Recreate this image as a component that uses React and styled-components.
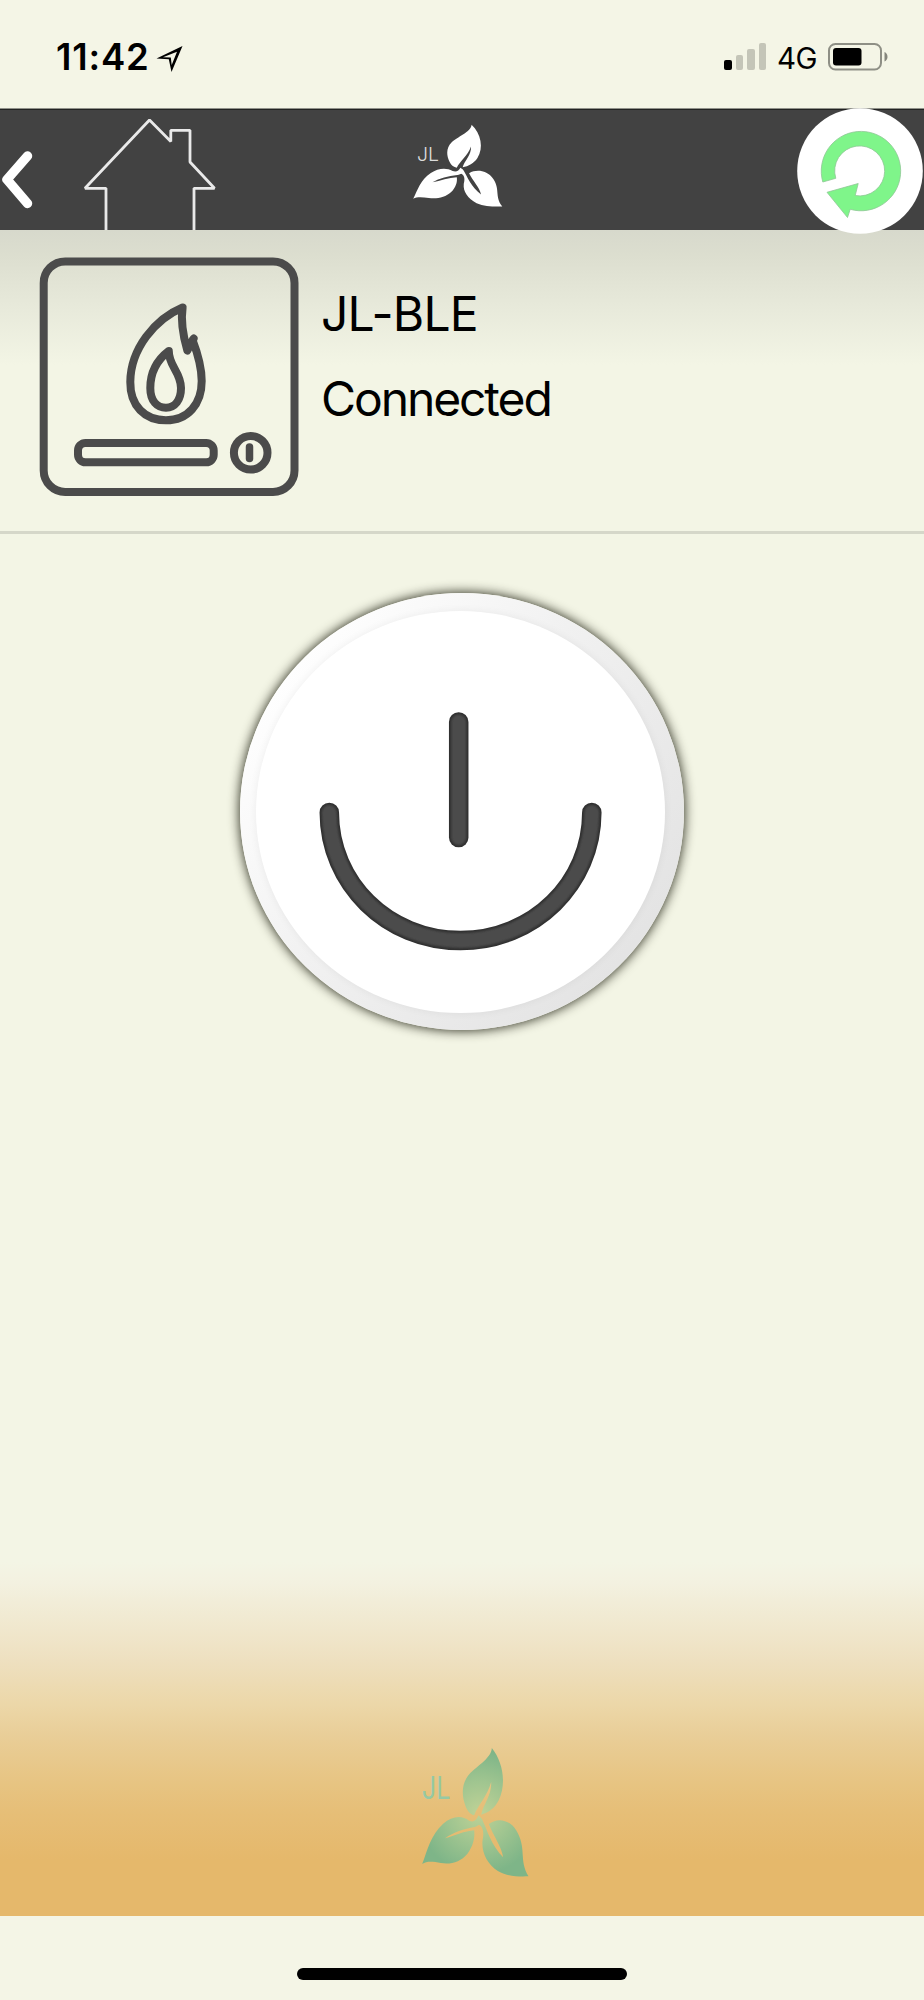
import React from "react";
import styled, { createGlobalStyle } from "styled-components";

const GlobalStyle = createGlobalStyle`
  * { box-sizing: border-box; }
  body { margin: 0; background: #f4f5e6; }
  svg { display: block; overflow: visible; }
  button { border: 0; padding: 0; margin: 0; background: none; }
`;

const Screen = styled.div`
  width: 924px;
  height: 2000px;
  display: flex;
  flex-direction: column;
  overflow: hidden;
  background: #f4f5e6;
  color: #000;
  font-family: Inter, "Liberation Sans", sans-serif;
`;

const StatusBar = styled.header`
  height: 108px;
  flex: none;
  display: flex;
  justify-content: space-between;
  align-items: flex-start;
  padding: 0 36px 0 56px;
`;

const StatusGroup = styled.div`
  display: flex;
  align-items: flex-start;
`;

const Clock = styled.span`
  width: 93px;
  margin: 35px 7px 0 0;
  font-size: 36.5px;
  line-height: 44px;
  font-weight: 600;
  letter-spacing: 0.8px;
  white-space: nowrap;
`;

const LocationIcon = styled.svg`
  margin-top: 46px;
`;

const SignalBars = styled.div`
  display: flex;
  align-items: flex-end;
  gap: 4px;
  height: 27px;
  margin: 43px 11px 0 0;
`;

const SignalBar = styled.i`
  width: 7.5px;
  height: ${(p) => p.$height}px;
  border-radius: 2px;
  background: ${(p) => (p.$on ? "#000" : "#c4c5b8")};
`;

const Network = styled.span`
  width: 40px;
  margin: 40px 11px 0 0;
  font-size: 29.5px;
  line-height: 36px;
  letter-spacing: -0.6px;
  white-space: nowrap;
`;

const BatteryIcon = styled.svg`
  margin-top: 43px;
`;

const NavBar = styled.nav`
  height: 122px;
  flex: none;
  position: relative;
  z-index: 1;
  display: flex;
  align-items: flex-start;
  border-top: 1px solid #90918a;
  background: linear-gradient(#222 1px, #424242 1px);
`;

const BackButton = styled.button`
  width: 34px;
  height: 58px;
  margin: 41px 48px 0 0;
`;

const HomeButton = styled.button`
  width: 136px;
  height: 113px;
  margin: 8px 0 0 0;
`;

const Brand = styled.div`
  width: 90px;
  height: 84px;
  margin: 15px 0 0 195px;
`;

const RefreshButton = styled.button`
  width: 126px;
  height: 126px;
  margin: -1px 1px 0 auto;
`;

const Content = styled.main`
  flex: 1;
  display: flex;
  flex-direction: column;
  background:
    linear-gradient(#d7d9cc 0, #dcdecf 25px, #e7e9da 75px, #f3f5e5 135px, rgba(243, 245, 229, 0) 136px),
    linear-gradient(
      #f3f5e5 0, #f3f5e5 1332px, #f3f1e0 1353px, #f1ead2 1387px, #eee0c0 1430px,
      #ecd7a8 1475px, #e9ce98 1505px, #e7c482 1553px, #e6be77 1583px, #e5b86b 1630px, #e5b86b 100%
    );
`;

const DeviceRow = styled.section`
  height: 304px;
  flex: none;
  display: flex;
  align-items: flex-start;
  padding: 28px 0 0 40px;
  border-bottom: 3px solid #d5d7c9;
`;

const DeviceIcon = styled.svg`
  flex: none;
`;

const DeviceText = styled.div`
  display: flex;
  flex-direction: column;
  gap: 25px;
  margin: 26px 0 0 22px;
`;

const DeviceLine = styled.div`
  font-size: 48px;
  line-height: 60px;
  font-weight: 380;
  letter-spacing: ${(p) => p.$tracking}px;
  white-space: nowrap;
`;

const PowerArea = styled.section`
  flex: 1;
  display: flex;
  justify-content: center;
  align-items: flex-start;
  padding-top: 59px;
`;

const PowerButton = styled.button`
  width: 444px;
  height: 437px;
  flex: none;
  display: flex;
  align-items: center;
  justify-content: center;
  padding: 0 3px 0 0;
  border-radius: 50%;
  background: linear-gradient(128deg, #fff 12%, #f1f1f1 45%, #e4e4e4 85%);
  box-shadow: 0 0 11px 1px rgba(45, 46, 32, 0.95);
`;

const PowerFace = styled.span`
  width: 409px;
  height: 402px;
  display: block;
  border-radius: 50%;
  background: #fff;
  box-shadow: 0 0 9px rgba(0, 0, 0, 0.06);
`;

const Footer = styled.footer`
  display: flex;
  padding: 0 0 39px 422px;
`;

const HomeArea = styled.div`
  height: 84px;
  flex: none;
  display: flex;
  justify-content: center;
  padding-top: 52px;
`;

const HomeIndicator = styled.div`
  width: 330px;
  height: 12px;
  border-radius: 6px;
  background: #000;
`;

const LogoLabel = styled.text`
  font-family: Inter, "Liberation Sans", sans-serif;
  font-weight: ${(p) => p.$weight};
  font-size: ${(p) => p.$size}px;
`;

const TOP_LEAF = "M275 82C274 115 222 140 203 166C182 195 186 231 196 256C202 274 212 281 222 284C233 254 262 226 273 184C275 224 250 249 243 282C264 276 283 264 296 238C319 191 309 124 275 82Z";
const LEFT_LEAF = "M66 430C82 389 91 343 129 309C155 286 185 282 207 300C222 307 229 297 235 284L244 293C244 306 239 315 224 319C191 325 160 334 135 353C163 345 194 331 222 329C225 352 218 378 202 399C181 424 152 432 122 427C98 423 80 421 66 430Z";
const RIGHT_LEAF = "M228 313L238 291L246 296C259 325 274 375 309 410C303 375 279 345 266 310C294 288 330 299 348 329C381 383 355 416 385 467C352 468 321 467 293 451C261 429 244 397 247 360C253 333 247 318 238 313Z";

function Leaves({ fill }) {
  return (
    <g fill={fill}>
      <path d={TOP_LEAF} />
      <path d={LEFT_LEAF} />
      <path d={RIGHT_LEAF} />
    </g>
  );
}

function HeaderLogo() {
  return (
    <svg width="90" height="84" viewBox="0 0 90 84">
      <LogoLabel x="4" y="36.500" $size={19} $weight={300} textLength="22" lengthAdjust="spacingAndGlyphs" fill="#dcdcdc">JL</LogoLabel>
      <g transform="translate(-18.2 -16.7) scale(.2792 .2125)">
        <Leaves fill="#fff" />
      </g>
    </svg>
  );
}

function FooterLogo() {
  return (
    <svg width="107" height="129" viewBox="66 82 320 387">
      <defs>
        <radialGradient id="leafTint" cx="238" cy="275" r="205" gradientUnits="userSpaceOnUse">
          <stop offset="0" stopColor="#bfd296" />
          <stop offset=".45" stopColor="#a0c590" />
          <stop offset=".9" stopColor="#7eb588" />
        </radialGradient>
      </defs>
      <LogoLabel x="65" y="235" $size={92} $weight={400} textLength="86" lengthAdjust="spacingAndGlyphs" fill="#96c9a4">JL</LogoLabel>
      <Leaves fill="url(#leafTint)" />
    </svg>
  );
}

function PowerGlyph({ inset }) {
  return (
    <g stroke={inset ? "#4c4c4c" : "#2f2f2f"} strokeWidth={inset ? 15 : 19.5} filter={inset ? "url(#soft)" : undefined}>
      <path d="M458.700 721V836.500" />
      <path d="M329.300 811.500C329.300 882 387 939.500 460.500 939.500S591.800 882 591.800 811.500" />
    </g>
  );
}

const SIGNAL = [[10, true], [15, false], [21, false], [27, false]];

export default function App() {
  return (
    <>
      <GlobalStyle />
      <Screen>
        <StatusBar>
          <StatusGroup>
            <Clock>11:42</Clock>
            <LocationIcon width="26" height="26" viewBox="0 0 26 26">
              <path d="M26.500 0L0.500 12.500L12.800 13.300L15.500 26Z M21 5.700L15.700 19L14.800 11.400L7 11.200Z" fill="#000" fillRule="evenodd" />
            </LocationIcon>
          </StatusGroup>
          <StatusGroup>
            <SignalBars>
              {SIGNAL.map(([height, on]) => <SignalBar key={height} $height={height} $on={on} />)}
            </SignalBars>
            <Network>4G</Network>
            <BatteryIcon width="60" height="28" viewBox="0 0 60 28">
              <rect x="1" y="1" width="52" height="25.5" rx="6.5" fill="none" stroke="#8e8f85" strokeWidth="2" />
              <rect x="5" y="5" width="28.5" height="17.5" rx="3" fill="#000" />
              <path d="M56.5 9Q59.5 10.5 59.5 13.8T56.5 18.6Z" fill="#85867c" />
            </BatteryIcon>
          </StatusGroup>
        </StatusBar>

        <NavBar>
          <BackButton aria-label="Back">
            <svg width="34" height="58" viewBox="0 0 34 58">
              <path d="M27.500 6L7 29.500L27.500 53.500" fill="none" stroke="#fff" strokeWidth="9.5" strokeLinecap="round" strokeLinejoin="round" />
            </svg>
          </BackButton>
          <HomeButton aria-label="Home">
            <svg width="136" height="113" viewBox="0 0 136 113">
              <path d="M24 113V71.300H3L67.500 3L88.800 24.500V13.300H108V45L132.500 71.300H112V113" fill="none" stroke="#e9e9e9" strokeWidth="2.8" strokeLinejoin="bevel" />
            </svg>
          </HomeButton>
          <Brand><HeaderLogo /></Brand>
          <RefreshButton aria-label="Refresh">
            <svg width="126" height="126" viewBox="0 0 126 126">
              <circle cx="63" cy="63" r="62.8" fill="#fff" />
              <path d="M25.800 74A39.7 39.7 0 1 1 53.200 101.300L50.500 109.500L30 84.300L61.200 75.500L58.200 87.500A25 25 0 1 0 38.800 70.300Z" fill="#7ff58a" stroke="#8fc795" strokeWidth="0.8" />
            </svg>
          </RefreshButton>
        </NavBar>

        <Content>
          <DeviceRow>
            <DeviceIcon width="259" height="239" viewBox="0 0 259 239" fill="none" stroke="#4b4b4b" strokeWidth="8" strokeLinecap="round" strokeLinejoin="round">
              <rect x="3.7" y="3.4" width="250.800" height="230.600" rx="21.500" />
              <path d="M142.600 49.500C115 61 90.500 91 90.300 124C90 148 105 162.300 126 162.300C148 162.300 161.700 146 161.700 123C161.700 108 157.500 95 152.500 82L153.700 80.600L147.300 92.500Q140 67 142.600 49.500Z" />
              <path d="M128.800 93C117 102 110.300 115 110.300 130C110.300 143 117 149.700 126 149.700C135 149.700 141 142 141 130C141 114 128.500 108 128.800 93Z" />
              <rect x="38" y="185" width="135.700" height="19.3" rx="7.5" />
              <circle cx="210.700" cy="194.800" r="16.800" />
              <path d="M209.500 189V200.500" strokeWidth="7.5" />
            </DeviceIcon>
            <DeviceText>
              <DeviceLine $tracking={-0.8}>JL-BLE</DeviceLine>
              <DeviceLine $tracking={-2.1}>Connected</DeviceLine>
            </DeviceText>
          </DeviceRow>
          <PowerArea>
            <PowerButton aria-label="Power">
              <PowerFace>
                <svg width="409" height="402" viewBox="256 610 409 402" fill="none" strokeLinecap="round">
                  <defs>
                    <filter id="soft" x="256" y="610" width="409" height="402" filterUnits="userSpaceOnUse">
                      <feGaussianBlur stdDeviation="1.3" />
                    </filter>
                  </defs>
                  <PowerGlyph />
                  <PowerGlyph inset />
                </svg>
              </PowerFace>
            </PowerButton>
          </PowerArea>
          <Footer><FooterLogo /></Footer>
        </Content>

        <HomeArea><HomeIndicator /></HomeArea>
      </Screen>
    </>
  );
}
